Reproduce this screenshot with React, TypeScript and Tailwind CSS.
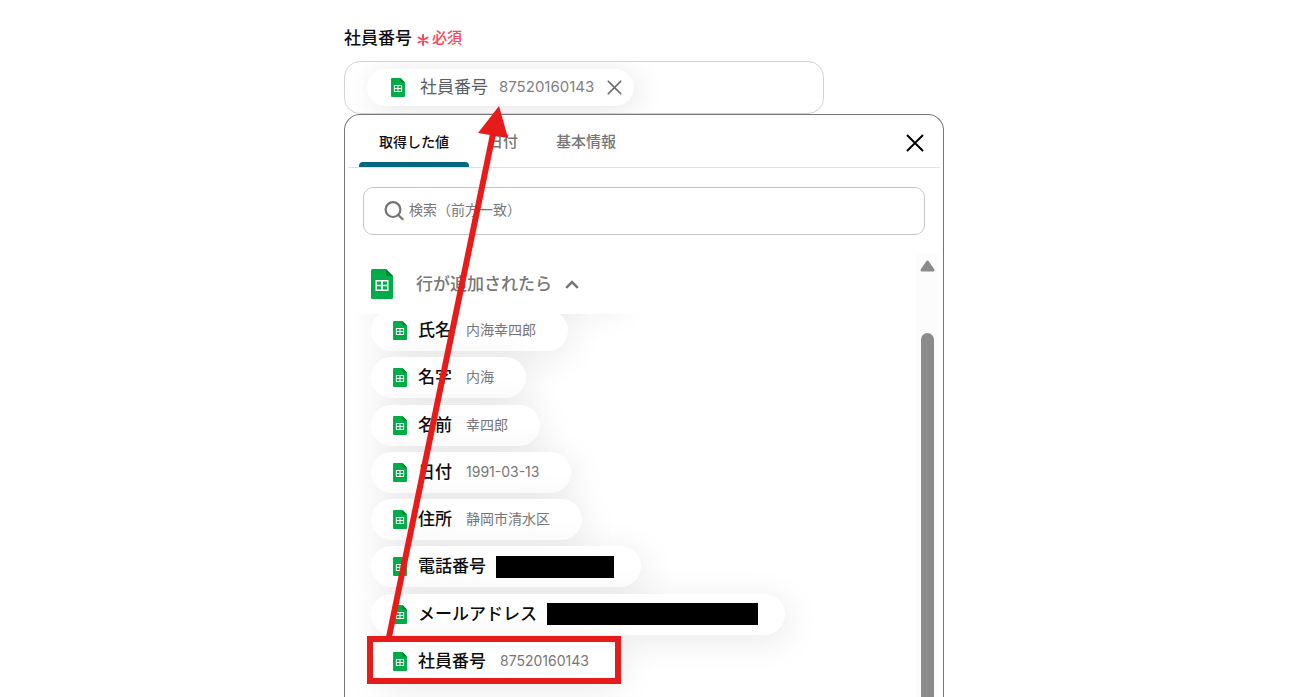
import { useState } from "react";

type Field = { label: string; value?: string; redacted?: string };

const fields: Field[] = [
  { label: "氏名", value: "内海幸四郎" },
  { label: "名字", value: "内海" },
  { label: "名前", value: "幸四郎" },
  { label: "日付", value: "1991-03-13" },
  { label: "住所", value: "静岡市清水区" },
  { label: "電話番号", redacted: "w-[118px]" },
  { label: "メールアドレス", redacted: "w-[211px]" },
  { label: "社員番号", value: "87520160143" },
];

const tabs = ["取得した値", "日付", "基本情報"];

function SheetIcon({ className }: { className: string }) {
  return (
    <svg viewBox="0 0 22 30" className={className} aria-hidden="true">
      <path d="M1.5 0H15L22 7V28.5a1.5 1.5 0 0 1-1.5 1.5H1.5a1.5 1.5 0 0 1-1.5-1.5V1.5a1.5 1.5 0 0 1 1.5-1.5Z" fill="#00ac47" />
      <path d="M15 0L22 7H16.5A1.5 1.5 0 0 1 15 5.5Z" fill="#00832d" />
      <path
        d="M4.5 11H17.5V22H4.5ZM6 12.6V15.7H10.2V12.6ZM11.8 12.6V15.7H16V12.6ZM6 17.3V20.4H10.2V17.3ZM11.8 17.3V20.4H16V17.3Z"
        fill="#fff"
        fillRule="evenodd"
      />
    </svg>
  );
}

function CrossIcon({ className, width }: { className: string; width: number }) {
  return (
    <svg viewBox="0 0 18 18" className={className} fill="none" stroke="currentColor" strokeWidth={width} strokeLinecap="round" aria-hidden="true">
      <path d="M1.5 1.5L16.5 16.5M16.5 1.5L1.5 16.5" />
    </svg>
  );
}

function FieldChip({ field }: { field: Field }) {
  return (
    <button
      type="button"
      className="flex h-[41px] shrink-0 items-center rounded-full bg-white pr-8 pl-[22px] whitespace-nowrap shadow-[4px_6px_36px_rgba(0,0,0,0.09)]"
    >
      <SheetIcon className="h-[19px] w-[14px]" />
      <span className="ml-[11px] pb-px text-[17px] leading-6 font-medium text-[#0c0c0e]">{field.label}</span>
      {field.redacted ? (
        <span className={`mr-[-5px] ml-[10px] h-[22px] bg-black ${field.redacted}`} />
      ) : (
        <span className="ml-[14px] pb-px text-[14px] leading-6 text-[#777]">{field.value}</span>
      )}
    </button>
  );
}

export default function App() {
  const [active, setActive] = useState(0);

  return (
    <main className="h-screen overflow-hidden bg-white px-3 font-[Inter,'Noto_Sans_CJK_JP',sans-serif]">
      <div className="relative mx-auto flex h-full max-w-[627px] flex-col">
        <div className="flex h-[61px] items-center pt-[22px] pb-2">
          <label htmlFor="employee" className="text-[17px] leading-6 font-medium text-[#0c0c0e]">
            社員番号
          </label>
          <span className="ml-[5px] flex items-center gap-[3px] text-[15px] leading-6 font-medium text-[#ff4457]">
            <svg viewBox="0 0 12 12" className="mt-1 size-[12px]" stroke="currentColor" strokeWidth="2" strokeLinecap="round" aria-hidden="true">
              <path d="M6 1V11M1.5 3.5L10.5 8.5M10.5 3.5L1.5 8.5" />
            </svg>
            必須
          </span>
        </div>

        <div className="flex h-[53px] w-full max-w-[480px] shrink-0 items-center overflow-hidden rounded-2xl border border-[#d0d3da] pr-4 pl-[22px]">
          <div className="flex h-[37px] shrink-0 items-center rounded-full bg-white pr-3 pl-6 shadow-[4px_4px_30px_rgba(0,0,0,0.1)]">
            <SheetIcon className="h-[19px] w-[14px]" />
            <span className="ml-[15px] pb-0.5 text-[17px] leading-6 text-[#5a5e66]">社員番号</span>
            <span className="ml-[11px] pb-0.5 text-[15px] leading-6 text-[#808080]">87520160143</span>
            <button type="button" aria-label="削除" className="ml-[13px] text-[#666]">
              <CrossIcon className="size-[15px]" width={2} />
            </button>
          </div>
          <input id="employee" type="text" className="min-w-0 flex-1 bg-transparent outline-none" />
        </div>

        <section className="flex min-h-0 w-full max-w-[600px] flex-1 flex-col rounded-t-2xl border border-b-0 border-[#777] bg-white">
          <div className="mx-[3px] flex h-[53px] shrink-0 items-stretch border-b border-[#e0e0e0] pr-4 pl-[11px]">
            <div role="tablist" className="flex">
              {tabs.map((tab, i) => (
                <button
                  key={tab}
                  type="button"
                  role="tab"
                  aria-selected={active === i}
                  onClick={() => setActive(i)}
                  className={
                    active === i
                      ? "flex w-[110px] flex-col items-center justify-between pt-[15px] text-[14px] leading-6 font-medium text-[#0c0c0e]"
                      : "flex flex-col items-center px-[19px] pt-[15px] text-[15px] leading-6 font-medium text-[#777]"
                  }
                >
                  {tab}
                  {active === i && <span className="h-[5px] w-full rounded-t-[4px] bg-[#05687f]" />}
                </button>
              ))}
            </div>
            <button type="button" aria-label="閉じる" className="ml-auto pt-1 text-black">
              <CrossIcon className="size-[18px]" width={2} />
            </button>
          </div>

          <label className="mx-[18px] mt-[19px] flex h-12 shrink-0 items-center gap-[5px] rounded-[10px] border border-[#c6c6c6] pr-4 pl-5">
            <svg viewBox="0 0 20 20" className="size-5 shrink-0" fill="none" stroke="#747474" strokeWidth="2.2" strokeLinecap="round" aria-hidden="true">
              <circle cx="9" cy="8.6" r="7.4" />
              <path d="M14.4 14L18.6 18.2" />
            </svg>
            <input
              type="text"
              aria-label="検索"
              placeholder="検索（前方一致）"
              className="min-w-0 flex-1 bg-transparent pb-0.5 text-[14px] leading-6 outline-none placeholder:text-[#777]"
            />
          </label>

          <div className="mt-[19px] flex min-h-0 flex-1 pr-[5px]">
            <div className="flex min-w-0 flex-1 flex-col">
              <button type="button" aria-expanded="true" className="flex h-[60px] shrink-0 items-center pl-[26px]">
                <SheetIcon className="h-[30px] w-[22px]" />
                <span className="ml-[23px] text-[17px] leading-6 font-medium text-[#777]">行が追加されたら</span>
                <svg viewBox="0 0 14 9" className="ml-[13px] h-[9px] w-[14px]" fill="none" stroke="#777" strokeWidth="2.6" aria-hidden="true">
                  <path d="M1.2 7.8L7 2L12.8 7.8" />
                </svg>
              </button>
              <div className="min-h-0 flex-1 overflow-hidden pl-[26px]">
                <div className="-mt-[51px] h-[41px] w-[250px] rounded-full shadow-[4px_6px_36px_rgba(0,0,0,0.09)]" />
                <div className="mt-[6px] flex h-[372px] flex-col items-start justify-between">
                  {fields.map((field) => (
                    <FieldChip key={field.label} field={field} />
                  ))}
                </div>
              </div>
            </div>
            <div className="flex w-[22px] flex-col items-center bg-[#fcfcfc] pt-[6px]">
              <svg viewBox="0 0 15 12" className="h-3 w-[15px] shrink-0" aria-hidden="true">
                <path d="M7.5 2L13 10H2Z" fill="#8b8b8b" stroke="#8b8b8b" strokeWidth="3" strokeLinejoin="round" />
              </svg>
              <span className="mt-[61px] w-[13px] flex-1 rounded-t-full bg-[#8b8b8b]" />
            </div>
          </div>
        </section>

        <span className="pointer-events-none absolute top-[636px] left-[23px] h-12 w-[254px] border-[6px] border-[#e81b1b]" />
        <svg viewBox="0 0 130 534" className="pointer-events-none absolute top-[106px] left-[40px] h-[534px] w-[130px]" aria-hidden="true">
          <path d="M5 531L109 28" stroke="#e81b1b" strokeWidth="6" />
          <path d="M115 0L94 27L124 32Z" fill="#e81b1b" />
        </svg>
      </div>
    </main>
  );
}
